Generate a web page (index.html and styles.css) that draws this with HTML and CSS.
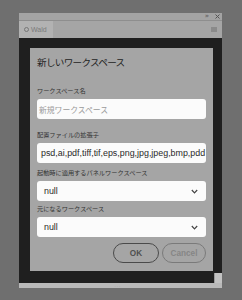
FILE: index.html
```html
<!DOCTYPE html>
<html lang="ja">
<head>
<meta charset="utf-8">
<link rel="stylesheet" href="styles.css">
</head>
<body>
<div class="panel">
  <div class="topbar">
    <span class="tb-collapse">»</span>
    <svg class="tb-close" width="5" height="5" viewBox="0 0 5 5"><path d="M0.5 0.5L4.5 4.5M4.5 0.5L0.5 4.5" stroke="#555" stroke-width="1"/></svg>
  </div>
  <div class="tabrow">
    <div class="tab"><span class="tab-dot"></span><span class="tab-name">Wald</span></div>
    <span class="tab-menu"></span>
  </div>
  <div class="stage">
    <div class="dialog">
      <div class="title">新しいワークスペース</div>
      <div class="label l1">ワークスペース名</div>
      <div class="field"><span class="placeholder">新規ワークスペース</span></div>
      <div class="label l2">配置ファイルの拡張子</div>
      <div class="field"><span class="value">psd,ai,pdf,tiff,tif,eps,png,jpg,jpeg,bmp,pdd</span></div>
      <div class="label l3">起動時に適用するパネルワークスペース</div>
      <div class="field select"><span class="value">null</span><svg class="chev" width="7" height="5" viewBox="0 0 7 5"><path d="M0.8 1L3.5 3.8L6.2 1" fill="none" stroke="#444" stroke-width="1.2"/></svg></div>
      <div class="label l4">元になるワークスペース</div>
      <div class="field select"><span class="value">null</span><svg class="chev" width="7" height="5" viewBox="0 0 7 5"><path d="M0.8 1L3.5 3.8L6.2 1" fill="none" stroke="#444" stroke-width="1.2"/></svg></div>
      <div class="buttons">
        <div class="btn ok">OK</div>
        <div class="btn cancel">Cancel</div>
      </div>
    </div>
  </div>
  <div class="bottombar"><span class="bb-text">···</span></div>
  <div class="grip"></div>
</div>
</body>
</html>
```
FILE: styles.css
```css
html, body {
  margin: 0;
  padding: 0;
}
body {
  width: 242px;
  height: 300px;
  background: #6f6f6f;
  font-family: "Noto Sans CJK JP", "Noto Sans", sans-serif;
  overflow: hidden;
}
.panel {
  position: relative;
  margin-left: 19px;
  margin-top: 13px;
  width: 203px;
}
.topbar {
  height: 7px;
  background: #a3a3a3;
  border-bottom: 1px solid #8e8e8e;
  display: flex;
  align-items: center;
  justify-content: flex-end;
  gap: 6px;
  padding-right: 2px;
}
.tb-collapse {
  font-family: "DejaVu Sans", sans-serif;
  font-size: 7px;
  line-height: 7px;
  color: #555;
}
.tabrow {
  height: 17px;
  background: #a5a5a5;
  display: flex;
  align-items: stretch;
  justify-content: space-between;
}
.tab {
  width: 34px;
  background: #b2b2b2;
  display: flex;
  align-items: center;
  gap: 2px;
  padding-left: 5px;
  box-sizing: border-box;
}
.tab-dot {
  width: 3px;
  height: 3px;
  border: 1px solid #777;
  border-radius: 50%;
}
.tab-name {
  font-family: "Liberation Sans", sans-serif;
  font-size: 7px;
  color: #7a7a7a;
}
.tab-menu {
  align-self: center;
  width: 6px;
  height: 5px;
  background: #8a8a8a;
  margin-right: 5px;
}
.stage {
  background: #1f1f1f;
  padding: 10px 9px 12px 11px;
}
.dialog {
  background: #a5a5a5;
  padding: 8px 7px 8px 7px;
  display: flex;
  flex-direction: column;
}
.title {
  font-size: 9.6px;
  line-height: 13px;
  color: #1e1e1e;
  letter-spacing: -0.7px;
}
.label {
  font-size: 6.2px;
  line-height: 9px;
  color: #333;
  margin-bottom: 4px;
  white-space: nowrap;
}
.l1 { margin-top: 17px; }
.l2 { margin-top: 11px; }
.l3 { margin-top: 5px; }
.l4 { margin-top: 3px; }
.field {
  height: 20px;
  background: #fbfbfb;
  border-radius: 3px;
  display: flex;
  align-items: center;
  padding: 0 4px;
  overflow: hidden;
  white-space: nowrap;
}
.placeholder {
  font-size: 7.8px;
  color: #9a9a9a;
  margin-left: -2px;
}
.value {
  font-family: "Liberation Sans", sans-serif;
  font-size: 8.9px;
  color: #2a2a2a;
}
.select {
  justify-content: space-between;
  padding: 0 8px 0 7px;
}
.chev {
  flex: none;
}
.buttons {
  margin-top: 6px;
  display: flex;
  justify-content: flex-end;
  gap: 3px;
}
.btn {
  height: 20px;
  box-sizing: border-box;
  border-radius: 10px;
  display: flex;
  align-items: center;
  justify-content: center;
  font-family: "Liberation Sans", sans-serif;
  font-size: 8.2px;
  font-weight: bold;
}
.ok {
  width: 46px;
  border: 1.2px solid #4a4a4a;
  color: #505050;
}
.cancel {
  width: 44px;
  border: 1px solid #7a7a7a;
  color: #858585;
}
.bottombar {
  height: 5px;
  background: #b9b9b9;
  display: flex;
  align-items: center;
  padding-left: 95px;
}
.bb-text {
  font-size: 4px;
  line-height: 4px;
  color: #999;
}
.grip {
  position: absolute;
  right: 0;
  bottom: 5px;
  width: 8px;
  height: 10px;
  background: #c2c2c2;
  border-left: 1px solid #9a9a9a;
  box-sizing: border-box;
}
```
